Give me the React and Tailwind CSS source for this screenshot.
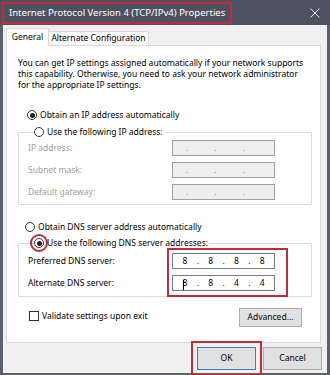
import React from 'react';

const Radio = ({ checked, marked }) => (
  <span
    className={
      'flex h-[10px] w-[10px] shrink-0 items-center justify-center rounded-full border border-[#333] bg-white' +
      (marked ? ' outline-2 outline-offset-[2px] outline-[#c42b3a]' : '')
    }
  >
    {checked && <span className="h-[5px] w-[5px] rounded-full bg-[#222]" />}
  </span>
);

const IpBox = ({ value, disabled, caret }) => {
  if (disabled) {
    return (
      <div className="flex h-[16px] w-[103px] items-center gap-[26px] border border-[#a0a0a0] bg-[#efefef] pl-[13px] text-[#8a8a8a]">
        <span>.</span>
        <span>.</span>
        <span>.</span>
      </div>
    );
  }
  return (
    <div className="relative flex h-[16px] w-[103px] items-center border border-[#7a7a7a] bg-white text-black">
      {value.map((v, i) => (
        <React.Fragment key={i}>
          <span className="relative flex-1 text-center">
            {v}
            {caret && i === 0 && (
              <span className="absolute left-[10px] top-[1px] h-[10px] w-px bg-black" />
            )}
          </span>
          {i < 3 && <span className="w-[2px] text-center">.</span>}
        </React.Fragment>
      ))}
    </div>
  );
};

const App = () => {
  return (
    <div className="flex h-[375px] w-[330px] flex-col bg-[#5b606b] font-['Noto_Sans',sans-serif] text-[8.5px] leading-none text-black">
      {/* title bar */}
      <div className="flex h-[25px] items-center justify-between bg-[#4d5260] pl-[2px] pr-[10px]">
        <div className="flex h-[22px] items-center border-2 border-[#c42b3a] px-[5px] text-[9.5px] text-white">
          Internet Protocol Version 4 (TCP/IPv4) Properties
        </div>
        <svg width="10" height="10" viewBox="0 0 10 10" className="text-[#e6e6e6]">
          <path d="M0.5 0.5 L9.5 9.5 M9.5 0.5 L0.5 9.5" stroke="currentColor" strokeWidth="1" />
        </svg>
      </div>

      <div className="mx-[3px] mb-[2px] flex flex-1 flex-col bg-[#f0f0f0] px-[3px]">
        {/* tabs */}
        <div className="flex items-end pt-[3px]">
          <div className="relative z-10 -mb-px flex h-[18px] w-[43px] items-center justify-center border border-b-0 border-[#d9d9d9] bg-white pb-[1px]">
            General
          </div>
          <div className="flex h-[14px] w-[100px] items-center justify-center border border-l-0 border-b-0 border-[#d9d9d9] bg-[#fafafa]">
            Alternate Configuration
          </div>
        </div>

        {/* panel */}
        <div className="mr-[3px] flex h-[298px] flex-col border border-[#d9d9d9] bg-white px-[11px] pt-[11px]">
          <p className="leading-[11px]">
            You can get IP settings assigned automatically if your network supports
            this capability. Otherwise, you need to ask your network administrator
            for the appropriate IP settings.
          </p>

          <div className="mt-[19px] flex h-[12px] items-center gap-[3px] pl-[9px]">
            <Radio checked />
            <span>Obtain an IP address automatically</span>
          </div>

          <fieldset className="mt-[6px] w-[294px] border border-[#dcdcdc] pb-[4px] pl-[9px] pt-[3px]">
            <legend className="ml-[6px] flex items-center gap-[3px] bg-white pr-[2px]">
              <Radio />
              <span>Use the following IP address:</span>
            </legend>
            <div className="grid grid-cols-[144px_103px] gap-y-[6px] text-[#a0a0a0]">
              <span className="self-center">IP address:</span>
              <IpBox disabled />
              <span className="self-center">Subnet mask:</span>
              <IpBox disabled />
              <span className="self-center">Default gateway:</span>
              <IpBox disabled />
            </div>
          </fieldset>

          <div className="mt-[16px] flex h-[12px] items-center gap-[3px] pl-[7px]">
            <Radio />
            <span>Obtain DNS server address automatically</span>
          </div>

          <fieldset className="mt-[5px] w-[294px] border border-[#dcdcdc] pb-[5px] pl-[9px] pt-[5px]">
            <legend className="ml-[6px] flex items-center gap-[3px] bg-white pr-[2px]">
              <Radio checked marked />
              <span>Use the following DNS server addresses:</span>
            </legend>
            <div className="flex">
              <div className="flex w-[144px] flex-col gap-[6px]">
                <span className="flex h-[16px] items-center">Preferred DNS server:</span>
                <span className="flex h-[16px] items-center">Alternate DNS server:</span>
              </div>
              <div className="relative flex flex-col gap-[6px]">
                <IpBox value={['8', '8', '8', '8']} />
                <IpBox value={['8', '8', '4', '4']} caret />
                <span className="absolute -bottom-[6px] -left-[5px] -right-[13px] -top-[5px] border-2 border-[#c42b3a]" />
              </div>
            </div>
          </fieldset>

          <div className="mt-[11px] flex items-center justify-between pl-[11px] pr-[7px]">
            <div className="flex items-center gap-[3px] pb-[3px]">
              <span className="h-[10px] w-[10px] border border-[#333] bg-white" />
              <span>Validate settings upon exit</span>
            </div>
            <button className="flex h-[19px] w-[63px] items-center justify-center border border-[#adadad] bg-[#e1e1e1]">
              Advanced...
            </button>
          </div>
        </div>

        {/* dialog buttons */}
        <div className="flex flex-1 items-center justify-end gap-[7px] pr-[2px]">
          <button className="flex h-[23px] w-[59px] items-center justify-center border border-[#3c7fb1] bg-[#e1e1e1] outline-2 outline-offset-[4px] outline-[#c42b3a]">
            OK
          </button>
          <button className="flex h-[23px] w-[59px] items-center justify-center border border-[#adadad] bg-[#e1e1e1]">
            Cancel
          </button>
        </div>
      </div>
    </div>
  );
};

export default App;
